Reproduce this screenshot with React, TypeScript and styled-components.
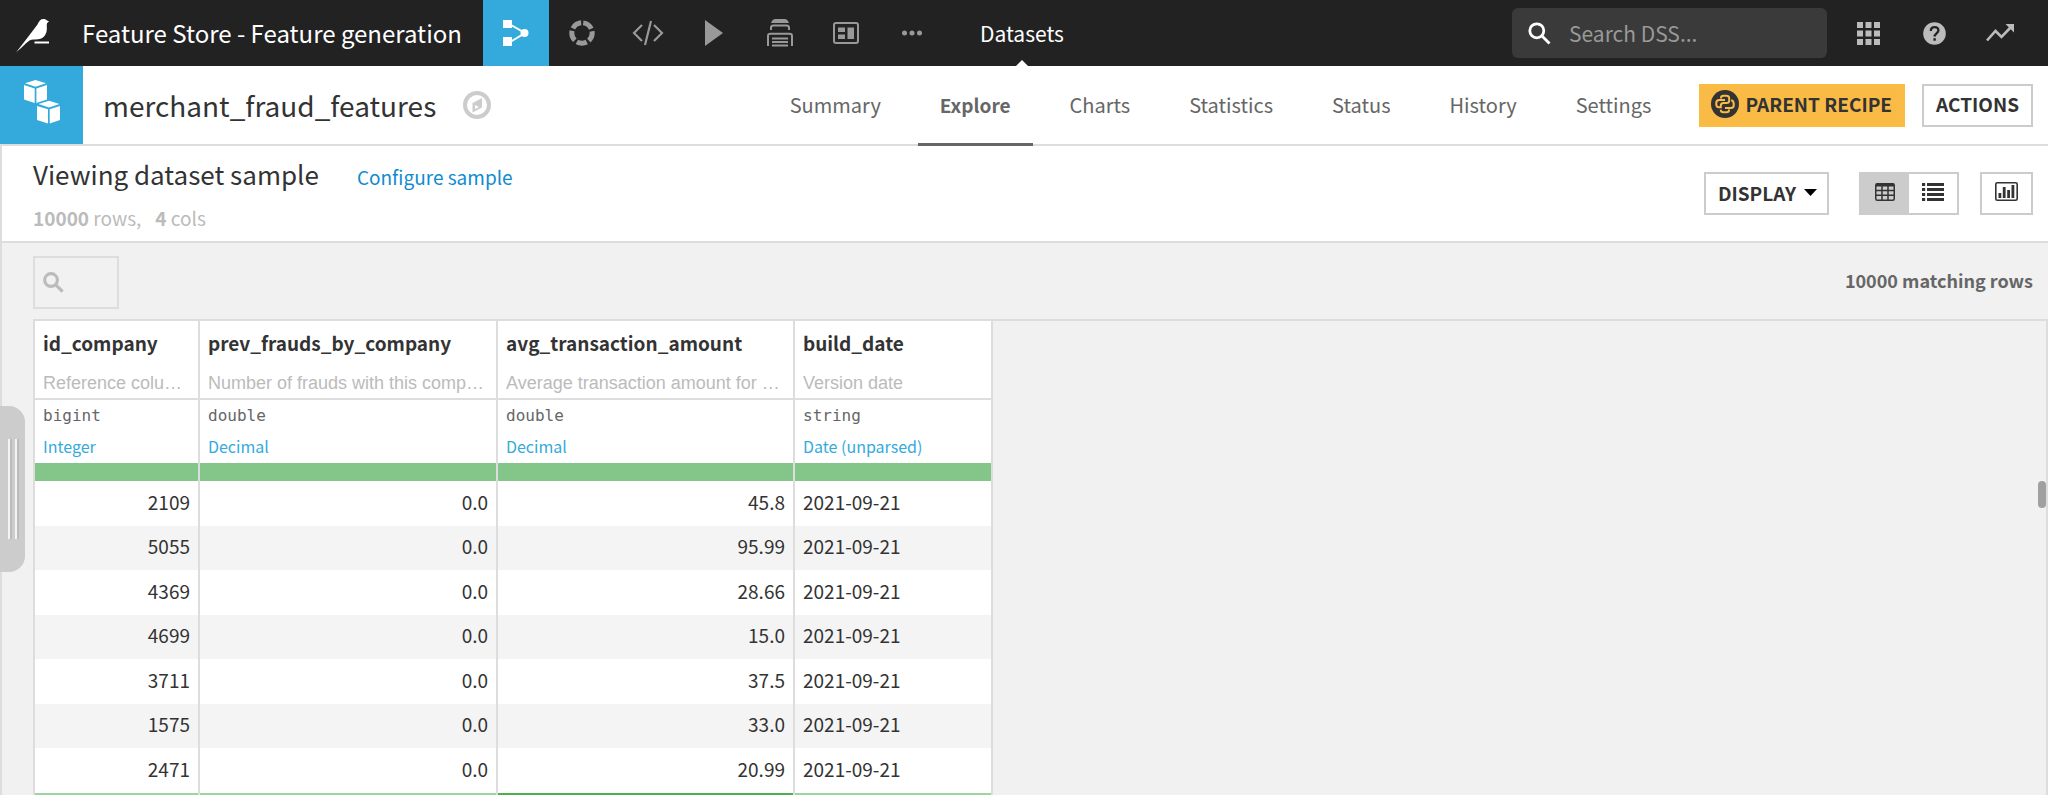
import React from "react";
import styled, { createGlobalStyle, css } from "styled-components";

const sans = `"Noto Sans CJK JP", "Noto Sans", sans-serif`;

const GlobalStyle = createGlobalStyle`
  *, *::before, *::after { box-sizing: border-box; }
  html, body, #root { height: 100%; }
  body {
    margin: 0;
    overflow: hidden;
    background: #f1f1f1;
    color: #333;
    font-family: ${sans};
    font-size: 19px;
    line-height: 24px;
  }
  button, input { font: inherit; color: inherit; border-radius: 0; }
  button { cursor: pointer; }
  a { text-decoration: none; }
  svg { display: block; flex: none; }
`;

const Page = styled.div`
  display: flex;
  flex-direction: column;
  height: 100vh;
  min-width: 1280px;
`;

const TopBar = styled.header`
  display: flex;
  align-items: center;
  flex: none;
  height: 66px;
  padding-right: 15px;
  background: #222;
  color: #fff;
`;

const HomeLink = styled.a`
  display: flex;
  padding: 6px 32px 0 16px;
`;

const ProjectLink = styled.a`
  color: #fff;
  font-size: 24px;
  line-height: 32px;
  white-space: nowrap;
  margin-right: 21px;
`;

const NavButton = styled.button<{ $active?: boolean }>`
  display: flex;
  align-items: center;
  justify-content: center;
  width: 66px;
  height: 66px;
  padding: 0;
  border: 0;
  color: ${(p) => (p.$active ? "#fff" : "#999")};
  background: ${(p) => (p.$active ? "#34aadc" : "transparent")};
`;

const SectionLink = styled.a`
  position: relative;
  display: flex;
  align-items: center;
  height: 66px;
  margin-left: 35px;
  color: #fff;
  font-size: 21px;

  &::after {
    content: "";
    position: absolute;
    bottom: 0;
    left: 50%;
    margin-left: -6px;
    border: 6px solid transparent;
    border-top-width: 0;
    border-bottom-color: #fff;
  }
`;

const GlobalSearch = styled.label`
  display: flex;
  align-items: center;
  width: 315px;
  height: 50px;
  margin-left: auto;
  margin-right: 8px;
  padding: 0 16px;
  gap: 18px;
  border-radius: 6px;
  background: #3a3a3a;

  input {
    flex: 1;
    min-width: 0;
    padding: 0;
    border: 0;
    outline: 0;
    background: transparent;
    font-size: 21px;
  }
  input::placeholder { color: #999; opacity: 1; }
`;

const ToolButton = styled(NavButton)`
  color: #bbb;
`;

const ObjectBar = styled.div`
  display: flex;
  align-items: center;
  flex: none;
  height: 80px;
  padding-right: 15px;
  background: #fff;
  border-bottom: 2px solid #ddd;
`;

const ObjectIcon = styled.div`
  display: flex;
  justify-content: center;
  width: 83px;
  height: 78px;
  padding-top: 14px;
  background: #34aadc;
  color: #fff;
`;

const ObjectName = styled.h1`
  margin: 0 27px 0 20px;
  font-size: 28px;
  font-weight: 400;
  line-height: 40px;
`;

const Tabs = styled.nav`
  display: flex;
  gap: 15px;
  margin-left: auto;
  margin-right: 26px;
`;

const Tab = styled.a<{ $active?: boolean }>`
  height: 80px;
  margin-bottom: -2px;
  padding: 0 22px;
  color: #666;
  font-size: 20px;
  line-height: 77px;
  ${(p) =>
    p.$active &&
    css`
      font-size: 19px;
      font-weight: 700;
      border-bottom: 3px solid #666;
    `}
`;

const Button = styled.button<{ $primary?: boolean }>`
  display: flex;
  align-items: center;
  justify-content: center;
  gap: 8px;
  height: 43px;
  padding: 0 12px 2px;
  border: 2px solid ${(p) => (p.$primary ? "#f9be40" : "#ccc")};
  background: ${(p) => (p.$primary ? "#f9bb46" : "#fff")};
  color: #333;
  font-weight: 700;
  white-space: nowrap;
`;

const ParentRecipe = styled(Button)`
  gap: 6px;
  padding: 0 11px 2px 10px;
  margin-right: 17px;
`;

const DisplayButton = styled(Button)`
  padding: 0 10px 2px 12px;
`;

const Main = styled.main`
  position: relative;
  display: flex;
  flex-direction: column;
  flex: 1;
  min-height: 0;
  border-left: 2px solid #ddd;
`;

const SampleBar = styled.section`
  display: flex;
  justify-content: space-between;
  flex: none;
  height: 97px;
  padding: 12px 15px 0 31px;
  background: #fff;
  border-bottom: 2px solid #ddd;
`;

const SampleTitle = styled.div`
  display: flex;
  align-items: baseline;
  gap: 38px;

  h2 { margin: 0; font-size: 26px; font-weight: 400; line-height: 32px; }
  a { color: #0f8bd0; }
`;

const SampleMeta = styled.p`
  margin: 16px 0 0;
  color: #bbb;
  font-size: 19px;
  line-height: 24px;

  span + span { margin-left: 14px; }
`;

const ViewTools = styled.div`
  display: flex;
  padding-top: 14px;
`;

const Segmented = styled.div`
  display: flex;
  margin: 0 21px 0 30px;
  border: 2px solid #ccc;
  height: 43px;
`;

const Segment = styled.button<{ $active?: boolean }>`
  display: flex;
  align-items: center;
  justify-content: center;
  width: 48px;
  padding: 0 0 4px;
  border: 0;
  color: #333;
  background: ${(p) => (p.$active ? "#ccc" : "#fff")};
`;

const IconButton = styled(Button)`
  width: 53px;
  padding: 0 0 4px;
`;

const FilterBar = styled.div`
  display: flex;
  justify-content: space-between;
  flex: none;
  height: 76px;
  padding: 13px 15px 0 31px;
`;

const FilterBox = styled.label`
  display: flex;
  align-items: center;
  width: 86px;
  height: 53px;
  padding: 0 8px;
  border: 2px solid #ddd;
  color: #bbb;

  input {
    flex: 1;
    min-width: 0;
    border: 0;
    outline: 0;
    background: transparent;
  }
`;

const MatchCount = styled.strong`
  padding-top: 12px;
  color: #666;
  font-size: 18px;
`;

const Grid = styled.div`
  position: relative;
  flex: 1;
  min-height: 0;
  margin-left: 31px;
  overflow: hidden;
  border: 2px solid #ddd;
  border-bottom: 0;
`;

const Table = styled.table`
  table-layout: fixed;
  width: 958px;
  border-collapse: separate;
  border-spacing: 0;
  background: #fff;

  th, td { border-right: 2px solid #ddd; }
`;

const HeadCell = styled.th`
  padding: 0;
  text-align: left;
  font-weight: 400;
  vertical-align: top;
`;

const HeadTop = styled.div`
  height: 79px;
  padding: 10px 8px 0;
  border-bottom: 2px solid #ddd;
`;

const ColumnName = styled.div`
  font-weight: 700;
  line-height: 24px;
`;

const Description = styled.div`
  margin-top: 16px;
  overflow: hidden;
  color: #bbb;
  font-family: "Liberation Sans", Arial, sans-serif;
  font-size: 18px;
  line-height: 24px;
  white-space: nowrap;
`;

const HeadTypes = styled.div`
  height: 63px;
  padding: 4px 8px 0;
`;

const StorageType = styled.div`
  color: #666;
  font-family: "DejaVu Sans Mono", monospace;
  font-size: 16px;
  line-height: 24px;
`;

const Meaning = styled.a`
  display: block;
  margin-top: 6px;
  color: #34aadc;
  font-size: 16px;
  line-height: 24px;
`;

const Quality = styled.div`
  height: 18px;
  background: #84c689;
`;

const BodyRow = styled.tr`
  height: 45px;
  &:nth-child(even) { height: 44px; background: #f4f4f4; }
`;

const Cell = styled.td<{ $numeric?: boolean }>`
  padding: 0 8px 4px;
  line-height: 24px;
  text-align: ${(p) => (p.$numeric ? "right" : "left")};
`;

const FootCell = styled.td<{ $strong?: boolean }>`
  height: 2px;
  padding: 0;
  background: ${(p) => (p.$strong ? "#4caf50" : "#9bd6a0")};
`;

const ScrollThumb = styled.div`
  position: absolute;
  top: 160px;
  right: 0;
  width: 8px;
  height: 27px;
  border-radius: 4px;
  background: #a0a0a0;
`;

const Drawer = styled.button`
  position: absolute;
  z-index: 1;
  top: 260px;
  left: -2px;
  display: flex;
  align-items: center;
  gap: 3px;
  width: 25px;
  height: 166px;
  padding: 0 0 0 8px;
  border: 0;
  border-radius: 0 16px 16px 0;
  background: #ccc;
`;

const Grip = styled.span`
  width: 4px;
  height: 100px;
  border-left: 2px solid #f4f4f4;
  background: #bbb;
`;

const BirdLogo = () => (
  <svg width="34" height="34" viewBox="0 0 34 34" fill="currentColor" color="#fff" aria-hidden="true">
    <path d="M0 33.500 12 18 21.500 5.500C23 2 24.500 0 27.500 0c1.500 0 2.700.5 3.400 1.500L33 2.200l-2 2c-.6 2 .2 4.500-.3 7.500-.8 5-4 8-8.700 8.600-3.500.4-6-.2-8.500 1.200C10 24 7 27.500 0 33.500Z" />
    <path d="M18.500 22.500H33v2H18.500z" />
  </svg>
);

const FlowIcon = () => (
  <svg width="26" height="26" viewBox="0 0 26 26" fill="currentColor" aria-hidden="true">
    <path d="M0 0h9v8H0zM0 17h9v9H0z" />
    <path d="M8 5 22 13 8 21.500" fill="none" stroke="currentColor" strokeWidth="2" />
    <circle cx="21.500" cy="13" r="4" />
  </svg>
);

const LabIcon = () => (
  <svg width="26" height="26" viewBox="0 0 26 26" fill="none" aria-hidden="true">
    <circle cx="13" cy="13" r="10.200" stroke="currentColor" strokeWidth="5" strokeDasharray="10.300 2.520" strokeDashoffset="-1.260" transform="rotate(-90 13 13)" />
  </svg>
);

const CodeIcon = () => (
  <svg width="32" height="26" viewBox="0 0 32 26" fill="none" stroke="currentColor" strokeWidth="2.200" aria-hidden="true">
    <path d="M10 5 2 13l8 8M22 5l8 8-8 8M19 1l-6 24" />
  </svg>
);

const PlayIcon = () => (
  <svg width="18" height="26" viewBox="0 0 18 26" fill="currentColor" aria-hidden="true">
    <path d="M0 0v26l18-13z" />
  </svg>
);

const JobsIcon = () => (
  <svg width="26" height="28" viewBox="0 0 26 28" fill="none" stroke="currentColor" strokeWidth="2" aria-hidden="true">
    <path d="M5.500 3c.5-1.300 1-2 2.500-2h10c1.500 0 2 .7 2.500 2zM4 11V9c0-1.600.8-2.400 2.400-2.400h13.200C21.200 6.600 22 7.400 22 9v2M1 27V17c0-1.500.8-2.300 2.400-2.300h19.200c1.600 0 2.400.8 2.400 2.300v10M5 19.500h16M5 23h16M5 26.500h16" />
  </svg>
);

const DashboardIcon = () => (
  <svg width="26" height="22" viewBox="0 0 26 22" aria-hidden="true">
    <rect x="1" y="1" width="24" height="20" rx="2" fill="none" stroke="currentColor" strokeWidth="2" />
    <path d="M5 5.500h7v4.500H5zM5 12.500h7V17H5zM14.500 5.500H21V17h-6.500z" fill="currentColor" />
  </svg>
);

const MoreIcon = () => (
  <svg width="20" height="6" viewBox="0 0 20 6" fill="currentColor" aria-hidden="true">
    <circle cx="2.500" cy="3" r="2.500" />
    <circle cx="10" cy="3" r="2.500" />
    <circle cx="17.500" cy="3" r="2.500" />
  </svg>
);

const SearchIcon = ({ size = 23, weight = 2.8 }: { size?: number; weight?: number }) => (
  <svg width={size} height={size} viewBox="0 0 23 23" fill="none" stroke="currentColor" strokeWidth={weight} aria-hidden="true">
    <circle cx="8.800" cy="8.800" r="7" />
    <path d="m14 14 7.500 7.500" />
  </svg>
);

const AppsIcon = () => (
  <svg width="23" height="23" viewBox="0 0 23 23" fill="currentColor" aria-hidden="true">
    <path d="M0 0h6v6H0zM8.500 0h6v6h-6zM17 0h6v6h-6zM0 8.500h6v6H0zM8.500 8.500h6v6h-6zM17 8.500h6v6h-6zM0 17h6v6H0zM8.500 17h6v6h-6zM17 17h6v6h-6z" />
  </svg>
);

const HelpIcon = () => (
  <svg width="23" height="23" viewBox="0 0 23 23" fill="none" aria-hidden="true">
    <circle cx="11.500" cy="11.500" r="11.300" fill="currentColor" />
    <path d="M7.800 9c0-2.300 1.500-3.800 3.800-3.800s3.800 1.400 3.800 3.400c0 2.700-3.800 3-3.800 6" stroke="#222" strokeWidth="2.300" />
    <path d="M10.400 16.200h2.400v2.500h-2.400z" fill="#222" />
  </svg>
);

const TrendIcon = () => (
  <svg width="28" height="18" viewBox="0 0 28 18" aria-hidden="true">
    <path d="m1 16.500 8.500-9.500 6 6L25 3" fill="none" stroke="currentColor" strokeWidth="2.600" />
    <path d="M19.500 0H28v8.500z" fill="currentColor" />
  </svg>
);

const CubesIcon = () => (
  <svg width="38" height="44" viewBox="0 0 38 44" fill="currentColor" aria-hidden="true">
    <path d="M2 3.300 12.500 0 23 3.300 12.500 6.700zM1 5l10.700 3.400V23L1 19.500zM24 5v14.500L13.400 23V8.400z" />
    <path d="M15.500 24 26 20.700 36.500 24 26 27.500zM14 26l11 3.300V43.500L14 40zM37 26v14l-10.300 3.500V29.300z" />
  </svg>
);

const CompassIcon = () => (
  <svg width="28" height="28" viewBox="0 0 28 28" fill="none" color="#ccc" aria-hidden="true">
    <circle cx="14" cy="14" r="12" stroke="currentColor" strokeWidth="4" />
    <path d="M19 7v9.500l-9.500 5V12zM12 14v4l4-2z" fill="currentColor" fillRule="evenodd" />
  </svg>
);

const PythonIcon = () => (
  <svg width="28" height="28" viewBox="0 0 28 28" fill="none" aria-hidden="true">
    <circle cx="14" cy="14" r="14" fill="#333" />
    <g stroke="#f9bb46" strokeWidth="2">
      <path d="M10 8.500V8c0-1.500 1-2.300 2.500-2.300h3c1.600 0 2.700.9 2.700 2.500v2.300c0 1.500-1 2.500-2.700 2.500h-3c-1.700 0-2.700 1-2.700 2.500v1.700H8c-2 0-2.800-1.200-2.800-3.500s1-3.600 2.800-3.600h6" />
      <path d="M18 19.500v.5c0 1.500-1 2.300-2.500 2.300h-3c-1.600 0-2.700-.9-2.700-2.500M14 18h6c1.800 0 2.800-1.300 2.800-3.600 0-2.500-.8-3.900-2.600-4.200" />
    </g>
  </svg>
);

const CaretIcon = () => (
  <svg width="13" height="7" viewBox="0 0 13 7" fill="#000" aria-hidden="true">
    <path d="M0 0h13L6.500 7z" />
  </svg>
);

const TableIcon = () => (
  <svg width="20" height="18" viewBox="0 0 20 18" fill="none" stroke="currentColor" strokeWidth="1.500" aria-hidden="true">
    <rect x=".75" y=".75" width="18.500" height="16.500" rx="1.500" />
    <path d="M1 2h18" strokeWidth="3" />
    <path d="M1 7.500h18M1 12.300h18M7 3v14M13 3v14" />
  </svg>
);

const ListIcon = () => (
  <svg width="22" height="18" viewBox="0 0 22 18" fill="currentColor" aria-hidden="true">
    <path d="M0 0h3.200v3H0zM5 0h17v3H5zM0 5h3.200v3H0zM5 5h17v3H5zM0 10h3.200v3H0zM5 10h17v3H5zM0 15h3.200v3H0zM5 15h17v3H5z" />
  </svg>
);

const ChartIcon = () => (
  <svg width="23" height="19" viewBox="0 0 23 19" fill="currentColor" aria-hidden="true">
    <rect x=".8" y=".8" width="21.400" height="17.400" rx="1.500" fill="none" stroke="currentColor" strokeWidth="1.600" />
    <path d="M3.500 11h2.800v5H3.500zM7.800 5h2.800v11H7.800zM12.200 8h2.800v8h-2.800zM16.500 3h2.800v13h-2.800z" />
  </svg>
);

const navItems = [
  { label: "Flow", icon: <FlowIcon />, active: true },
  { label: "Lab", icon: <LabIcon /> },
  { label: "Code", icon: <CodeIcon /> },
  { label: "Run", icon: <PlayIcon /> },
  { label: "Jobs", icon: <JobsIcon /> },
  { label: "Dashboards", icon: <DashboardIcon /> },
  { label: "More", icon: <MoreIcon /> },
];

const tabs = ["Summary", "Explore", "Charts", "Statistics", "Status", "History", "Settings"];

const columns = [
  { name: "id_company", description: "Reference colu…", type: "bigint", meaning: "Integer", width: 165 },
  { name: "prev_frauds_by_company", description: "Number of frauds with this comp…", type: "double", meaning: "Decimal", width: 298 },
  { name: "avg_transaction_amount", description: "Average transaction amount for …", type: "double", meaning: "Decimal", width: 297 },
  { name: "build_date", description: "Version date", type: "string", meaning: "Date (unparsed)", width: 198 },
];

const rows = [
  ["2109", "0.0", "45.8", "2021-09-21"],
  ["5055", "0.0", "95.99", "2021-09-21"],
  ["4369", "0.0", "28.66", "2021-09-21"],
  ["4699", "0.0", "15.0", "2021-09-21"],
  ["3711", "0.0", "37.5", "2021-09-21"],
  ["1575", "0.0", "33.0", "2021-09-21"],
  ["2471", "0.0", "20.99", "2021-09-21"],
];

export default function App() {
  return (
    <Page>
      <GlobalStyle />
      <TopBar>
        <HomeLink href="#home" aria-label="Home"><BirdLogo /></HomeLink>
        <ProjectLink href="#project">Feature Store - Feature generation</ProjectLink>
        {navItems.map((item) => (
          <NavButton key={item.label} aria-label={item.label} $active={item.active}>{item.icon}</NavButton>
        ))}
        <SectionLink href="#datasets">Datasets</SectionLink>
        <GlobalSearch>
          <SearchIcon />
          <input type="text" placeholder="Search DSS..." aria-label="Search DSS" />
        </GlobalSearch>
        <ToolButton aria-label="Applications"><AppsIcon /></ToolButton>
        <ToolButton aria-label="Help"><HelpIcon /></ToolButton>
        <ToolButton aria-label="Activity"><TrendIcon /></ToolButton>
      </TopBar>

      <ObjectBar>
        <ObjectIcon><CubesIcon /></ObjectIcon>
        <ObjectName>merchant_fraud_features</ObjectName>
        <CompassIcon />
        <Tabs>
          {tabs.map((tab) => (
            <Tab key={tab} href={"#" + tab.toLowerCase()} $active={tab === "Explore"}>{tab}</Tab>
          ))}
        </Tabs>
        <ParentRecipe $primary><PythonIcon />PARENT RECIPE</ParentRecipe>
        <Button>ACTIONS</Button>
      </ObjectBar>

      <Main>
        <SampleBar>
          <div>
            <SampleTitle>
              <h2>Viewing dataset sample</h2>
              <a href="#configure">Configure sample</a>
            </SampleTitle>
            <SampleMeta>
              <span><b>10000</b> rows,</span><span><b>4</b> cols</span>
            </SampleMeta>
          </div>
          <ViewTools>
            <DisplayButton>DISPLAY<CaretIcon /></DisplayButton>
            <Segmented>
              <Segment $active aria-label="Table view"><TableIcon /></Segment>
              <Segment aria-label="List view"><ListIcon /></Segment>
            </Segmented>
            <IconButton aria-label="Quick charts"><ChartIcon /></IconButton>
          </ViewTools>
        </SampleBar>

        <FilterBar>
          <FilterBox>
            <SearchIcon size={21} weight={3.4} />
            <input type="text" aria-label="Filter columns" />
          </FilterBox>
          <MatchCount>10000 matching rows</MatchCount>
        </FilterBar>

        <Grid>
          <Table>
            <colgroup>
              {columns.map((c) => <col key={c.name} width={c.width} />)}
            </colgroup>
            <thead>
              <tr>
                {columns.map((c) => (
                  <HeadCell key={c.name} scope="col">
                    <HeadTop>
                      <ColumnName>{c.name}</ColumnName>
                      <Description>{c.description}</Description>
                    </HeadTop>
                    <HeadTypes>
                      <StorageType>{c.type}</StorageType>
                      <Meaning href="#meaning">{c.meaning}</Meaning>
                    </HeadTypes>
                    <Quality />
                  </HeadCell>
                ))}
              </tr>
            </thead>
            <tbody>
              {rows.map((row) => (
                <BodyRow key={row[0]}>
                  {row.map((value, i) => <Cell key={i} $numeric={i < 3}>{value}</Cell>)}
                </BodyRow>
              ))}
            </tbody>
            <tfoot>
              <tr>
                {columns.map((c, i) => <FootCell key={c.name} $strong={i === 2} />)}
              </tr>
            </tfoot>
          </Table>
          <ScrollThumb />
        </Grid>

        <Drawer aria-label="Open side panel"><Grip /><Grip /></Drawer>
      </Main>
    </Page>
  );
}
